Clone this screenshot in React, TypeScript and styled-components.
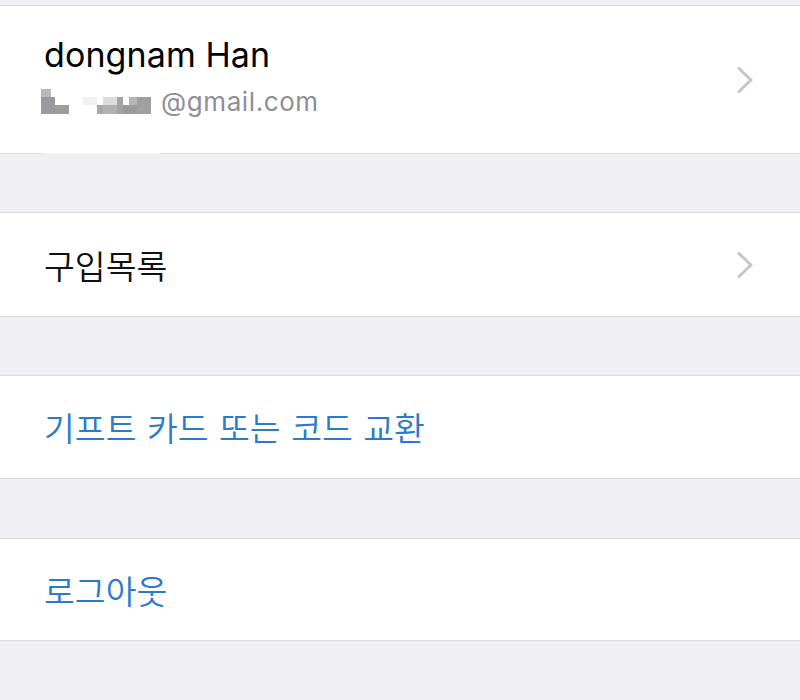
import React from "react";
import styled, { createGlobalStyle } from "styled-components";

const Global = createGlobalStyle`
  html, body { margin: 0; padding: 0; background: #efeff4; }
  body { font-family: Inter, "Noto Sans CJK KR", sans-serif; }
  *, *::before, *::after { box-sizing: border-box; }
`;

const Page = styled.div`
  width: 800px;
  height: 700px;
  background: #efeff4;
  display: flex;
  flex-direction: column;
  overflow: hidden;
`;

const Gap = styled.div<{ $h: number }>`
  height: ${(p) => p.$h}px;
  flex: none;
`;

const Group = styled.div<{ $h: number }>`
  flex: none;
  height: ${(p) => p.$h}px;
  background: #ffffff;
  border-top: 1px solid #dadade;
  border-bottom: 1px solid #dadade;
  display: flex;
  align-items: center;
  padding: 0 44px;
  position: relative;
`;

const Body = styled.div`
  flex: 1;
  display: flex;
  flex-direction: column;
  margin-top: -8px;
`;

const Name = styled.div`
  font-family: Inter, sans-serif;
  font-size: 34px;
  color: #000;
  line-height: 40px;
  letter-spacing: 0.1px;
`;

const EmailRow = styled.div`
  display: flex;
  align-items: center;
  gap: 8px;
  margin-top: 12px;
  margin-left: -3px;
`;

const Email = styled.span`
  font-family: Inter, sans-serif;
  font-size: 26px;
  letter-spacing: 0.6px;
  color: #8e8e93;
  line-height: 30px;
`;

const Label = styled.div<{ $blue?: boolean }>`
  flex: 1;
  font-family: "Noto Sans CJK KR", sans-serif;
  font-size: 33.5px;
  font-weight: 350;
  word-spacing: 3px;
  color: ${(p) => (p.$blue ? "#2a7bcb" : "#111")};
  line-height: 42px;
`;

const ChevronWrap = styled.div`
  width: 18px;
  height: 26px;
  display: flex;
  align-items: center;
  justify-content: center;
  margin-right: 2px;
`;

const Highlight = styled.div`
  position: absolute;
  left: 41px;
  bottom: -1px;
  width: 119px;
  height: 1px;
  background: #f3f3f6;
`;

const Chevron = () => (
  <ChevronWrap>
    <svg width="18" height="26" viewBox="0 0 18 26">
      <path
        d="M3 1.5 L15 13 L3 24.5"
        fill="none"
        stroke="#c5c5ca"
        strokeWidth="3"
        strokeLinecap="round"
        strokeLinejoin="round"
      />
    </svg>
  </ChevronWrap>
);

const Mosaic = () => (
  <svg width="112" height="26" viewBox="0 0 112 26">
    <rect x="0" y="0" width="10" height="8" fill="#b9b9bc" />
    <rect x="0" y="8" width="14" height="17" fill="#9a9a9e" />
    <rect x="14" y="16" width="14" height="9" fill="#9d9da0" />
    <rect x="42" y="8" width="14" height="8" fill="#f1f1f3" />
    <rect x="56" y="16" width="6" height="9" fill="#a7a7aa" />
    <rect x="62" y="8" width="14" height="8" fill="#dcdcdf" />
    <rect x="62" y="16" width="14" height="9" fill="#b1b1b4" />
    <rect x="76" y="8" width="6" height="17" fill="#a3a3a6" />
    <rect x="82" y="16" width="14" height="9" fill="#9a9a9d" />
    <rect x="88" y="8" width="14" height="8" fill="#b6b6b9" />
    <rect x="96" y="8" width="14" height="17" fill="#a0a0a3" />
  </svg>
);

export default function App() {
  return (
    <>
      <Global />
      <Page>
        <Gap $h={5} />
        <Group $h={149}>
          <Body>
            <Name>dongnam Han</Name>
            <EmailRow>
              <Mosaic />
              <Email>@gmail.com</Email>
            </EmailRow>
          </Body>
          <Chevron />
          <Highlight />
        </Group>
        <Gap $h={58} />
        <Group $h={105}>
          <Label>구입목록</Label>
          <Chevron />
        </Group>
        <Gap $h={58} />
        <Group $h={104}>
          <Label $blue>기프트 카드 또는 코드 교환</Label>
        </Group>
        <Gap $h={59} />
        <Group $h={103}>
          <Label $blue>로그아웃</Label>
        </Group>
      </Page>
    </>
  );
}
